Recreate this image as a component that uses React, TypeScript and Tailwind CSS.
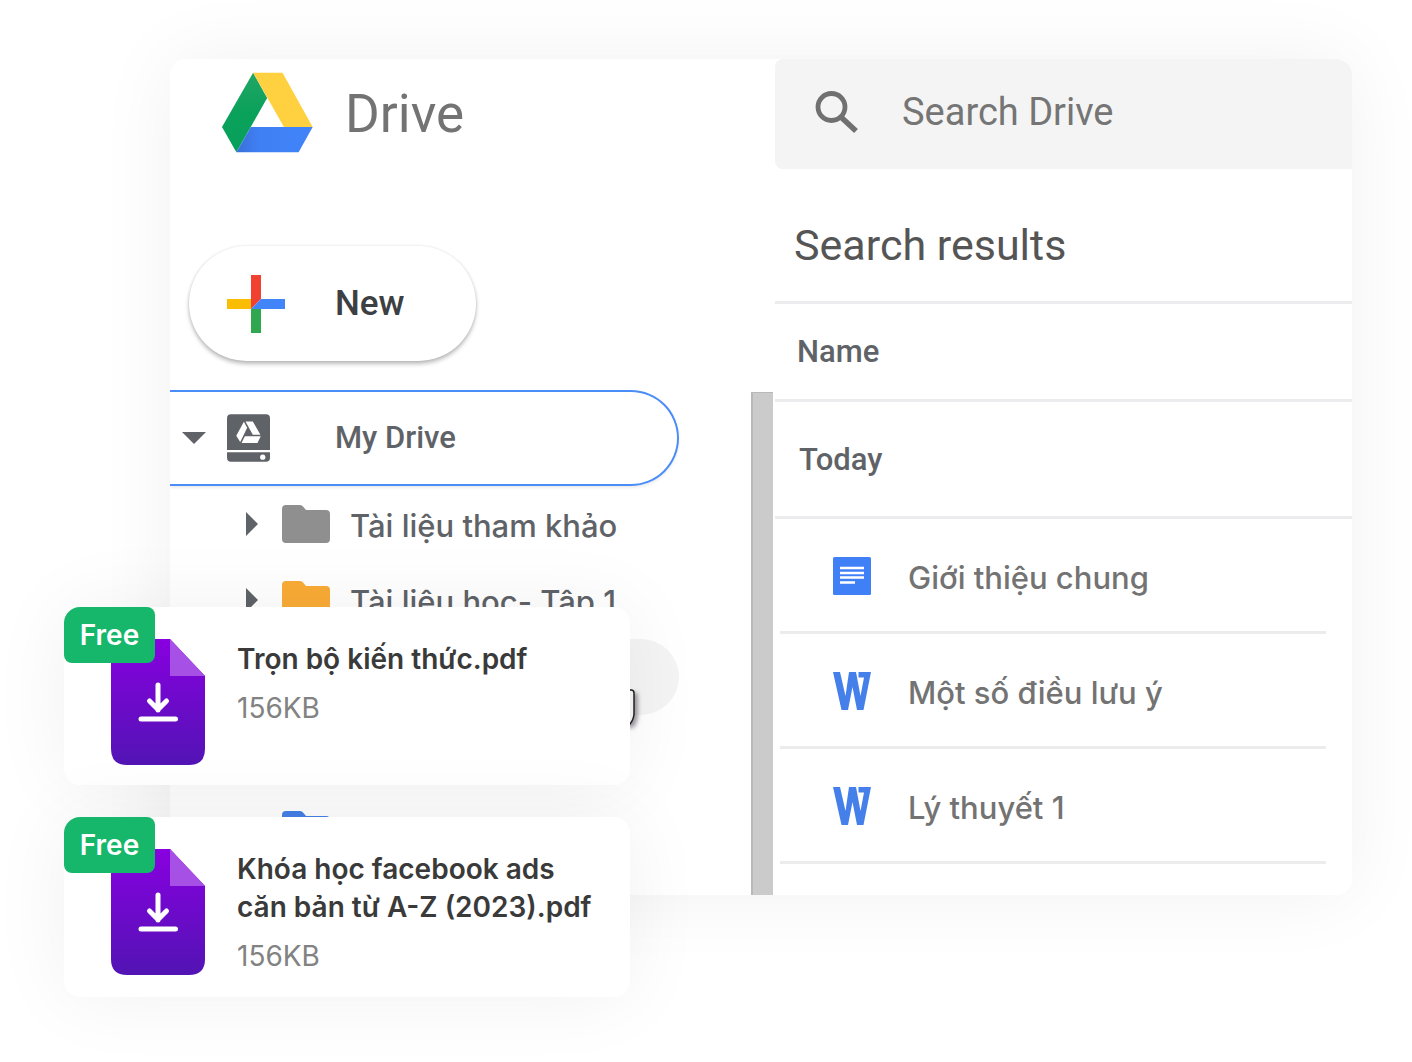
import React from "react";

function DriveLogo() {
  return (
    <svg viewBox="188 66 272 240" className="h-[81px] w-[91px] shrink-0" aria-hidden="true">
      <defs>
        <linearGradient id="logoGreen" x1="0" y1="0" x2="0" y2="1">
          <stop offset="0" stopColor="#22a565" />
          <stop offset="0.5" stopColor="#0aa15b" />
          <stop offset="1" stopColor="#07a05a" />
        </linearGradient>
        <linearGradient id="logoBlue" x1="0" y1="0" x2="1" y2="0">
          <stop offset="0" stopColor="#3a6fd8" />
          <stop offset="0.3" stopColor="#4080f5" />
          <stop offset="1" stopColor="#4083f8" />
        </linearGradient>
      </defs>
      <path d="M281 67L323 143L231 305L188 229Z" fill="url(#logoGreen)" />
      <path d="M281 67H369L459 229H373Z" fill="#ffd040" />
      <path d="M274 229H459L417 305H231Z" fill="url(#logoBlue)" />
    </svg>
  );
}

function PlusIcon() {
  return (
    <svg viewBox="0 0 58 58" className="size-[58px] shrink-0" aria-hidden="true">
      <path d="M24 0H34V24L24 34Z" fill="#f04131" />
      <path d="M0 24H24V34H0Z" fill="#fbbc04" />
      <path d="M34 24H58V34H24Z" fill="#4285f8" />
      <path d="M24 34H34V58H24Z" fill="#2fa84f" />
    </svg>
  );
}

function MyDriveIcon() {
  return (
    <svg viewBox="186 101 130 144" className="h-12 w-[43px] shrink-0" aria-hidden="true">
      <path d="M198 101H304Q316 101 316 113V209H186V113Q186 101 198 101Z" fill="#5f6368" />
      <path d="M186 216H316V233Q316 245 304 245H198Q186 245 186 233Z" fill="#5f6368" />
      <circle cx="294" cy="231" r="8" fill="#fff" />
      <path d="M237 124L247 142L226 185L214 166Z" fill="#fff" />
      <path d="M242 123H264L287 163H264Z" fill="#fff" />
      <path d="M240 168H288L278 188H230Z" fill="#fff" />
    </svg>
  );
}

function FolderIcon({ color }: { color: string }) {
  return (
    <svg viewBox="0 0 48 38" className="h-[38px] w-12 shrink-0" aria-hidden="true">
      <path
        d="M4 0H18Q20 0 21 1.500L24 5H44Q48 5 48 9V34Q48 38 44 38H4Q0 38 0 34V4Q0 0 4 0Z"
        fill={color}
      />
    </svg>
  );
}

function ArrowRight() {
  return (
    <svg viewBox="0 0 12 24" className="h-6 w-3 shrink-0" aria-hidden="true">
      <path d="M0 0L12 12L0 24Z" fill="#5f6368" />
    </svg>
  );
}

function DocIcon() {
  return (
    <svg viewBox="0 0 38 38" className="size-[38px] shrink-0" aria-hidden="true">
      <rect width="38" height="38" rx="1.500" fill="#4080f7" />
      <path d="M7 11H31M7 16H31M7 20.500H31M7 25.500H22" stroke="#fff" strokeWidth="2.400" />
    </svg>
  );
}

function WordIcon() {
  return (
    <svg viewBox="0 0 38 38" className="size-[38px] shrink-0" aria-hidden="true">
      <path
        d="M0 0H7L12.500 24L16 0H23L27.500 24L31 5.500H25.500V0H38L30.500 38H24L19.500 15L15 38H8.500Z"
        fill="#4580ea"
      />
    </svg>
  );
}

function FileIcon({ id }: { id: string }) {
  return (
    <svg viewBox="0 0 94 126" className="h-[126px] w-[94px] shrink-0" aria-hidden="true">
      <defs>
        <linearGradient id={id} x1="0" y1="0" x2="0" y2="1">
          <stop offset="0" stopColor="#8800e0" />
          <stop offset="1" stopColor="#5214b4" />
        </linearGradient>
      </defs>
      <path
        d="M16 0H59L94 37V110Q94 126 78 126H16Q0 126 0 110V16Q0 0 16 0Z"
        fill={`url(#${id})`}
      />
      <path d="M59 0L94 37H59Z" fill="#a650e6" />
      <path
        d="M47 46V71M38.500 62L47 70.500L55.500 62M30 80H64.500"
        fill="none"
        stroke="#fff"
        strokeWidth="5"
        strokeLinecap="round"
        strokeLinejoin="round"
      />
    </svg>
  );
}

const folders = [
  { color: "#8f8f8f", name: "Tài liệu tham khảo" },
  { color: "#f9ab35", name: "Tài liệu học- Tập 1" },
];

const results = [
  { icon: <DocIcon />, name: "Giới thiệu chung" },
  { icon: <WordIcon />, name: "Một số điều lưu ý" },
  { icon: <WordIcon />, name: "Lý thuyết 1" },
];

const files = [
  { id: "fileA", name: "Trọn bộ kiến thức.pdf", size: "156KB" },
  { id: "fileB", name: "Khóa học facebook ads căn bản từ A-Z (2023).pdf", size: "156KB" },
];

function Sidebar() {
  return (
    <aside className="min-w-0 overflow-hidden pt-[13px]">
      <div className="flex h-[81px] items-center gap-8 pl-[52px]">
        <DriveLogo />
        <span className="pt-1 text-[53px] leading-none text-[#737373]">Drive</span>
      </div>

      <button
        type="button"
        className="mt-[93px] ml-[19px] flex h-[115px] w-[287px] items-center gap-[50px] rounded-full bg-white pl-[38px] text-[35px] font-medium text-[#3c4043] shadow-[0_3px_4px_rgba(0,0,0,0.26),0_0_3px_rgba(0,0,0,0.1)]"
      >
        <PlusIcon />
        <span className="pt-[2px]">New</span>
      </button>

      <nav className="mt-[29px] mr-[72px]" aria-label="Folders">
        <button
          type="button"
          className="flex h-[96px] w-full items-center rounded-r-full border-2 border-l-0 border-[#4a8cf8] pl-3 text-[31px] font-medium text-[#5f6368] shadow-[0_2px_3px_rgba(0,0,0,0.08)]"
        >
          <svg viewBox="0 0 24 12" className="mr-[21px] h-3 w-6 shrink-0" aria-hidden="true">
            <path d="M0 0H24L12 12Z" fill="#5f6368" />
          </svg>
          <MyDriveIcon />
          <span className="pl-[65px]">My Drive</span>
        </button>

        <ul>
          {folders.map((f) => (
            <li key={f.name}>
              <button
                type="button"
                className="flex h-[76px] w-full items-center pl-[76px] font-[Inter,sans-serif] text-[31px] font-medium whitespace-nowrap text-[#5f6368]"
              >
                <ArrowRight />
                <span className="pr-5 pl-6">
                  <FolderIcon color={f.color} />
                </span>
                <span className="pt-1">{f.name}</span>
              </button>
            </li>
          ))}
          <li className="relative mt-px h-[76px] rounded-r-full bg-[#f4f4f4]">
            <svg
              viewBox="0 0 22 40"
              className="absolute top-[49px] right-[41px] h-10 w-[22px] overflow-visible drop-shadow-[3px_3px_2px_rgba(60,50,70,0.5)]"
              aria-hidden="true"
            >
              <path
                d="M0 2H15Q18 2 18 5V25Q18 31 14 36H0Z"
                fill="#f6f6f6"
                stroke="#222"
                strokeWidth="1.500"
              />
            </svg>
          </li>
          <li className="h-[76px]" />
          <li className="mt-px flex h-[76px] items-center pl-28">
            <FolderIcon color="#4580e8" />
          </li>
        </ul>
      </nav>
    </aside>
  );
}

function Results() {
  return (
    <main className="min-w-0 pb-[31px] pl-[2px]">
      <label className="flex h-[110px] items-center rounded-l-lg bg-[#f4f4f4] pb-1 pl-10">
        <svg viewBox="0 0 43 42" className="h-[42px] w-[43px] shrink-0" aria-hidden="true">
          <circle cx="16.500" cy="16" r="13.500" fill="none" stroke="#707070" strokeWidth="4.800" />
          <path d="M27 27L41 40" stroke="#707070" strokeWidth="5.500" />
        </svg>
        <input
          type="text"
          aria-label="Search Drive"
          placeholder="Search Drive"
          className="ml-11 min-w-0 flex-1 bg-transparent text-[38px] text-[#757575] outline-none placeholder:text-[#757575]"
        />
      </label>

      <h1 className="flex h-[132px] items-center pt-5 pl-[19px] text-[43px] text-[#555]">
        Search results
      </h1>

      <table className="w-full border-collapse text-left">
        <thead>
          <tr className="h-[98px] border-t-[3px] border-[#ececef]">
            <th className="pt-[2px] pl-[22px] text-[31px] font-medium text-[#5f6368]">Name</th>
          </tr>
        </thead>
        <tbody>
          <tr className="h-[117px] border-y-[3px] border-[#ececef]">
            <th className="pt-[2px] pl-6 text-[31px] font-medium text-[#5f6368]">Today</th>
          </tr>
          {results.map((r) => (
            <tr key={r.name}>
              <td className="p-0 pr-[26px] pl-[5px]">
                <div className="flex h-[115px] items-center gap-[37px] border-b-[3px] border-[#ececec] pt-[2px] pl-[53px] font-[Inter,sans-serif] text-[31px] font-medium text-[#737373]">
                  {r.icon}
                  <span className="pt-1">{r.name}</span>
                </div>
              </td>
            </tr>
          ))}
        </tbody>
      </table>
    </main>
  );
}

export default function App() {
  return (
    <div className="relative min-h-screen bg-white pt-[59px] pr-[60px] pb-16 pl-[170px] font-[Roboto,sans-serif]">
      <div className="rounded-2xl shadow-[0_0_80px_rgba(0,0,0,0.06)]">
        <div className="grid grid-cols-[581fr_22px_579fr] overflow-hidden rounded-2xl bg-white">
          <Sidebar />
          <div className="mt-[333px] border-t border-l-2 border-[#b9b9b9] bg-[#cbcbcb]" />
          <Results />
        </div>
      </div>

      <div className="absolute top-[607px] left-16 flex w-full max-w-[566px] flex-col gap-8">
        {files.map((f) => (
          <article
            key={f.id}
            className="relative flex gap-8 rounded-2xl bg-white pt-8 pr-8 pb-5 pl-[47px] font-[Inter,sans-serif] shadow-[0_0_80px_rgba(0,0,0,0.06)]"
          >
            <FileIcon id={f.id} />
            <div className="min-w-0 flex-1 pt-px pb-[2px]">
              <h2 className="text-[28px] leading-[38px] font-semibold text-[#3a3a3a]">{f.name}</h2>
              <p className="mt-[11px] text-[28px] leading-[38px] text-[#828282]">{f.size}</p>
            </div>
            <span className="absolute top-0 left-0 flex h-14 w-[91px] items-center justify-center rounded-lg rounded-tl-2xl bg-[#16b76b] text-[28px] font-semibold text-white">
              Free
            </span>
          </article>
        ))}
      </div>
    </div>
  );
}
